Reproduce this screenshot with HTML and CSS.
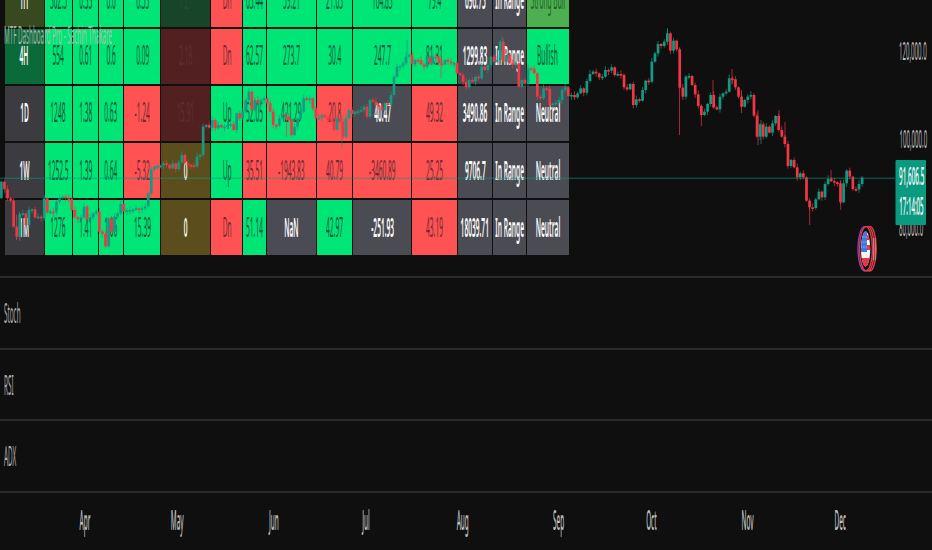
FILE: index.html
```
<!DOCTYPE html>
<html lang="en">
<head>
<meta charset="utf-8">
<title>MTF Dashboard Pro</title>
<link rel="stylesheet" href="styles.css">
</head>
<body>
<main class="app">
  <section class="pane chart">
    <div class="dash" id="dash"></div>
    <svg class="overlay" id="overlay" width="932" height="276" viewBox="0 0 932 276">
      <g id="candles" class="candles"></g>
      <path class="price-line" d="M0 178.2H895"/>
      <text class="title" x="4" y="44" textLength="108" lengthAdjust="spacingAndGlyphs">MTF Dashboard Pro - Sachin Thakare</text>
      <g class="axis">
        <text transform="translate(899 60) scale(.235 1)">120,000.0</text>
        <text transform="translate(899.5 148) scale(.235 1)">100,000.0</text>
        <text transform="translate(899 236) scale(.235 1)">80,000.0</text>
      </g>
      <rect x="895.5" y="160" width="30.5" height="65" rx="1" fill="#0a9a80"/>
      <g class="tag">
        <text transform="translate(899 185) scale(.245 1)">91,606.5</text>
        <text transform="translate(899.3 214.5) scale(.235 1)">17:14:05</text>
      </g>
      <g fill="#111" stroke-width="1.4">
        <ellipse cx="869.8" cy="248.7" rx="6.4" ry="22.3" stroke="#e23b48"/>
        <ellipse cx="867.8" cy="248.7" rx="6.4" ry="22.3" stroke="#e23b48"/>
        <ellipse cx="864.8" cy="248.7" rx="6.8" ry="22.3" stroke="#8d3fae"/>
        <ellipse cx="866" cy="248.7" rx="6.4" ry="22" stroke="#e23b48"/>
      </g>
      <clipPath id="flag"><ellipse cx="865.6" cy="249" rx="4.6" ry="17.5"/></clipPath>
      <g clip-path="url(#flag)">
        <path fill="#f4f4f4" d="M860 231h12v36h-12z"/>
        <path fill="#e0384a" d="M866 235h6v5h-6zM866 245h6v5h-6zM860 258h12v9h-12z"/>
        <path fill="#3b7be0" d="M860 231h7v21h-7z"/>
        <path stroke="#a9c8fa" stroke-width="1" stroke-dasharray="1 1.4" d="M861 237h6M861 242h6M861 247h6"/>
      </g>
      <path d="M873.2 238q1 11 0 22M875 238q1 11 0 22" fill="none" stroke="#e9a0a4" stroke-width=".7"/>
    </svg>
  </section>
  <section class="pane"><span class="label">Stoch</span></section>
  <section class="pane"><span class="label">RSI</span></section>
  <section class="pane"><span class="label">ADX</span></section>
  <footer class="months">
    <b><span>Apr</span></b><b><span>May</span></b><b><span>Jun</span></b><b><span>Jul</span></b><b><span>Aug</span></b><b><span>Sep</span></b><b><span>Oct</span></b><b><span>Nov</span></b><b><span>Dec</span></b>
  </footer>
</main>
<script src="chart.js"></script>
</body>
</html>
```
FILE: styles.css
```
* { box-sizing: border-box; }
body {
  margin: 0;
  background: #0f0f0f;
  color: #c4c4c4;
  font-family: "Noto Sans", sans-serif;
  font-size: 27px;
  overflow: hidden;
}
.app {
  width: 932px;
  height: 550px;
  display: grid;
  grid-template-rows: 278px 71.5px 71.5px 71.5px 1fr;
}
.pane {
  border-bottom: 2px solid #2b2b2b;
  display: flex;
  align-items: center;
  overflow: hidden;
  white-space: nowrap;
}
.label {
  padding-left: 17px;
  transform: scaleX(.235);
  transform-origin: 0 50%;
  color: #b0b0b0;
  opacity: .99;
}
.chart { position: relative; align-items: flex-start; }
.overlay { position: absolute; left: 0; top: 0; font-size: 26px; }
.dash {
  margin: -27px 0 0 5px;
  display: grid;
  grid-template-columns: 38.5px 27px 25.6px 24px 36.4px 49px 30.5px 23px 49px 35.5px 57.8px 44.6px 34.3px 32.9px 41.5px;
  grid-template-rows: 54px 54.5px 55px 55px 55px;
  gap: 2.2px 1px;
  background: #101010;
}
.cell {
  min-width: 0;
  display: flex;
  align-items: center;
  justify-content: center;
  white-space: nowrap;
  padding-bottom: 3px;
}
.cell span { transform: scaleX(.245); flex: none; opacity: .99; }
.g { background: #00e676; color: #13523a; }
.r { background: #ff5252; color: #6e2c35; }
.n { background: #4b4b53; }
.t { background: #3b3b40; }
.n, .t, .t1, .t2, .o { color: #fff; font-weight: 600; }
.t1 { background: #38491f; }
.t2 { background: #0b6a39; }
.s { background: #4caf50; color: #225f2a; }
.dg { background: #174529; color: #294f33; }
.dr { background: #532021; color: #5c3236; }
.o { background: #5c4d1d; }
.price-line { stroke: #0a9a80; stroke-width: 1; opacity: .65; }
.title { fill: #c0c0c0; fill-opacity: .85; font-size: 26px; opacity: .99; }
.axis { fill: #bdbdbd; opacity: .99; }
.tag { fill: #fff; font-weight: 500; opacity: .99; }
.months {
  display: grid;
  grid-template-columns: 93px 93px 99px 87px 105px 87px 99px 93px 93px;
  padding: 7px 0 0 38px;
}
.months b {
  display: flex;
  justify-content: center;
  font-weight: 500;
  height: 40px;
}
.months span { transform: scaleX(.235); line-height: 40px; opacity: .99; }
```
FILE: chart.js
```
const rows = [
  [['t1','1H'],['g','302.5'],['g','0.33'],['g','0.6'],['g','0.53'],['dg','7.27'],['r','Dn'],['g','63.44'],['g','59.21'],['g','21.63'],['g','164.83'],['g','79.4'],['n','696.73'],['n','In Range'],['s','Strong Bull']],
  [['t2','4H'],['g','554'],['g','0.61'],['g','0.6'],['g','0.09'],['dr','2.18'],['r','Dn'],['g','62.57'],['g','273.7'],['g','30.4'],['g','247.7'],['g','81.31'],['n','1299.83'],['n','In Range'],['g','Bullish']],
  [['t','1D'],['g','1248'],['g','1.38'],['g','0.63'],['r','-1.24'],['dr','15.91'],['g','Up'],['g','52.05'],['g','421.29'],['r','20.8'],['n','40.47'],['r','49.32'],['n','3490.86'],['n','In Range'],['n','Neutral']],
  [['t','1W'],['g','1252.5'],['g','1.39'],['g','0.64'],['r','-5.32'],['o','0'],['g','Up'],['r','35.51'],['r','-1943.83'],['r','40.79'],['r','-3460.89'],['r','25.25'],['n','9706.7'],['n','In Range'],['n','Neutral']],
  [['t','1M'],['g','1276'],['g','1.41'],['g','1.06'],['g','15.39'],['o','0'],['r','Dn'],['g','51.14'],['n','NaN'],['g','42.97'],['n','-251.93'],['r','43.19'],['n','18039.71'],['n','In Range'],['n','Neutral']]
];
document.getElementById('dash').innerHTML = rows.flat()
  .map(([kind, text]) => `<div class="cell ${kind}"><span>${text}</span></div>`).join('');

// Closing levels per stretch: first x, base level, then levels in thirds of a pixel.
const stretches = [
  [1.4, 130, [155,178,205,212,290,320,252,250,285,240,238,262,260,265,205,247,245,247,215,205,200,205,206,240,262,268,262,230,268,262,250,245,305,312,348,265,305,260,250,222,243,241,240,239,235,238,235,230,190,118,110,108]],
  [160.5, 75, [272,265,270,280,265,282,262,240,265,270,271,275,245,240,155,150,158,135,160,150,157,155,150,148,165,115,130,110,75,50,105,75,85,75,70,85,110,150,151,130,120,125,135,180,155,130,110,70,75,70,100,130,128,120]],
  [325, 30, [262,270,275,300,265,275,320,265,240,252,245,244,240,230,260,210,215,225,230,240,220,225,195,140,110,108,100,80,75,103,90,91,103,110,80,100,80,82,100,103,90,95,100,99,130]],
  [460, 0, [225,245,262,240,245,230,235,200,210,195,170,185,180,125,185,165,190,195,190,260,240,250,205,206,220,290,295,265,266,315,310,308,300,270,262]],
  [568.3, 0, [288,285,292,280,265,278,243,222,215,220,232,230,210,212,202,225,222,225,262,268,252,315,298,302,270,242,245,185,160,132,138,125,100,152,122,148,263,290,230,228,255,283,318,345,335,312,285,322,328,290,280,275,235,238,262,290,320]],
  [744.7, 80, [60,50,45,107,170,133,170,140,158,130,108,150,170,192,258,240,262,292,280,292,362,382,384,358,335,352,312,297,303,307,310,367,310,272,290,327,328,312,293]]
];
// Long wicks: [x, top, bottom].
const wicks = [[16.5,215,240],[19.6,212,241],[106.6,228,247],[109.7,225,247],[286.5,118,137],[342,115,147],[407,40,55],[441,55,78],[502,36,60],[503.5,42,62],[549.5,97,110],[667.5,28,45],[679.5,48,135],[701.3,105,126],[713,80,108],[732,69,85],[741.5,90,113],[758,110,145],[761,120,144],[779,110,120],[785,122,140],[809.7,200,225],[831,170,182],[840.7,180,210]];
const rising = '#139b82', falling = '#f23645';
let svg = wicks.map(([x, a, b]) => {
  const color = [342, 667.5, 407, 502, 761, 549.5].includes(x) ? rising : falling;
  return `<path d="M${x} ${a}V${b}" stroke="${color}" stroke-width=".9" opacity=".75"/>`;
}).join('');
let prev = 198;
stretches.forEach(([x0, base, levels], s) => {
  const end = s + 1 < stretches.length ? stretches[s + 1][0] : x0 + levels.length * 3.09;
  const step = (end - x0) / levels.length;
  levels.forEach((v, i) => {
    const x = x0 + i * step, y = base + v / 3;
    const color = y <= prev ? rising : falling;
    const top = Math.min(y, prev), h = Math.max(1.6, Math.abs(y - prev));
    const up = 1 + (i * 7 % 5) * .7, down = 1 + (i * 11 % 4) * .8;
    svg += `<path d="M${x} ${top - up}V${top + h + down}" stroke="${color}" stroke-width=".9" opacity=".75"/>`;
    svg += `<rect x="${x - 1.35}" y="${top}" width="2.7" height="${h}" fill="${color}"/>`;
    prev = y;
  });
});
document.getElementById('candles').innerHTML = svg;
```
